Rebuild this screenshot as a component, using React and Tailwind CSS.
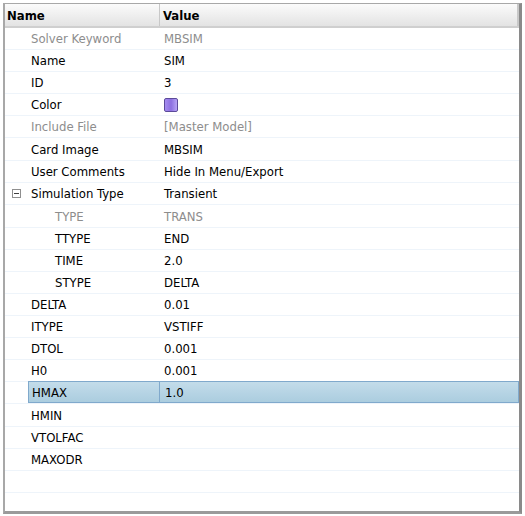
import React from "react";

const rows = [
  { name: "Solver Keyword", value: "MBSIM", dim: true },
  { name: "Name", value: "SIM" },
  { name: "ID", value: "3" },
  { name: "Color", swatch: true },
  { name: "Include File", value: "[Master Model]", dim: true },
  { name: "Card Image", value: "MBSIM", tall: true },
  { name: "User Comments", value: "Hide In Menu/Export" },
  { name: "Simulation Type", value: "Transient", group: true },
  { name: "TYPE", value: "TRANS", dim: true, child: true, tall: true },
  { name: "TTYPE", value: "END", child: true },
  { name: "TIME", value: "2.0", child: true },
  { name: "STYPE", value: "DELTA", child: true },
  { name: "DELTA", value: "0.01" },
  { name: "ITYPE", value: "VSTIFF" },
  { name: "DTOL", value: "0.001" },
  { name: "H0", value: "0.001" },
  { name: "HMAX", value: "1.0", selected: true },
  { name: "HMIN", value: "", tall: true },
  { name: "VTOLFAC", value: "" },
  { name: "MAXODR", value: "" },
  { name: "", value: "" },
  { name: "", value: "" },
];

function Row({ row }) {
  const text = row.dim ? "text-[#8d8d8d]" : "text-black";
  return (
    <div className={"flex border-b border-[#eef4fa] " + (row.tall ? "h-[23px]" : "h-[22px]")}>
      <div className="w-[23px] shrink-0 flex items-center justify-center">
        {row.group && (
          <div className="w-[9px] h-[9px] border border-[#8f8f8f] bg-white flex items-center justify-center">
            <div className="w-[5px] h-px bg-[#404040]" />
          </div>
        )}
      </div>
      <div
        className={
          "flex flex-1 " +
          (row.selected
            ? "bg-gradient-to-b from-[#c3dcea] to-[#abcddf] border border-[#80a9cc] -mt-px h-[22px]"
            : "")
        }
      >
        <div
          className={
            "w-[131px] shrink-0 flex items-center " +
            (row.child ? "pl-[27px] " : "pl-[3px] ") +
            (row.selected ? "border-r border-[#80a9cc] " : "") +
            text
          }
        >
          {row.name}
        </div>
        <div className={"flex-1 flex items-center pl-[5px] " + text}>
          {row.swatch ? (
            <div className="w-[14px] h-[14px] rounded-[2px] border border-[#5b4a9a] bg-gradient-to-r from-[#a58cf0] via-[#8c6fe0] to-[#b7a3f5]" />
          ) : (
            row.value
          )}
        </div>
      </div>
    </div>
  );
}

export default function App() {
  return (
    <div
      className="w-[525px] h-[516px] bg-white pt-[3px] pl-[3px] text-[13px] leading-none"
      style={{ fontFamily: "Tahoma, 'DejaVu Sans Condensed', 'Liberation Sans', sans-serif" }}
    >
      <div className="w-[519px] h-[511px] border-l-2 border-t border-[#a8a8a8] border-r-[3px] border-r-[#8a8a8a] border-b-[3px] border-b-[#9a9a9a] overflow-hidden">
        <div className="flex h-[24px] border-b-2 border-[#cfcfcf] bg-gradient-to-b from-[#fbfbfb] to-[#e3e3e3]">
          <div className="w-[155px] shrink-0 flex items-center pt-px pl-[2px] font-bold text-black border-r border-[#c8c8c8]">
            Name
          </div>
          <div className="flex-1 flex items-center pt-px pl-[3px] font-bold text-black border-r-2 border-[#c8c8c8]">
            Value
          </div>
        </div>
        <div>
          {rows.map((r, i) => (
            <Row key={i} row={r} />
          ))}
        </div>
      </div>
    </div>
  );
}
